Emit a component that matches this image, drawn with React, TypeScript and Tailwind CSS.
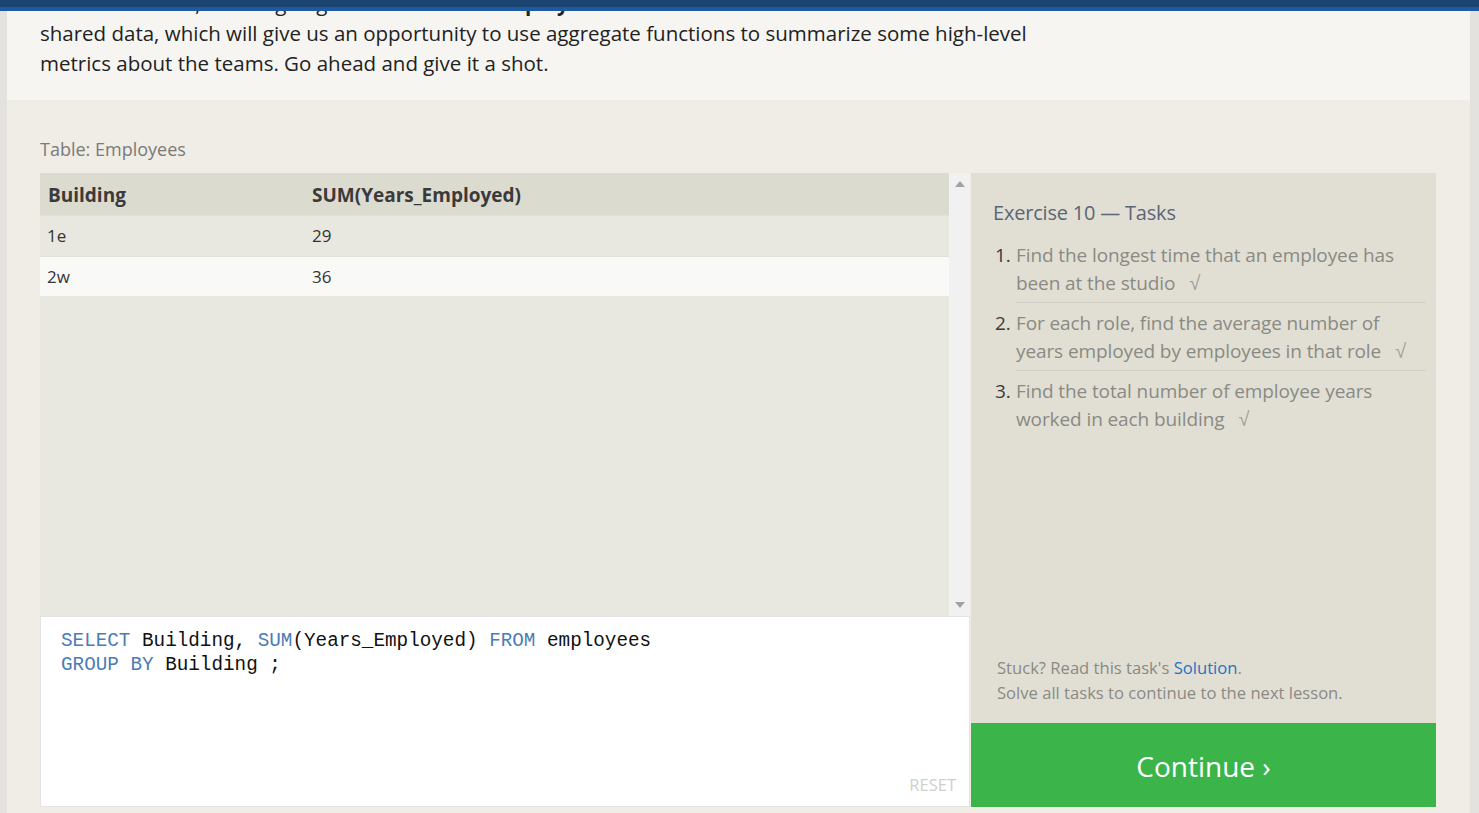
import React from "react";

const sans = { fontFamily: '"Open Sans", "Noto Sans", sans-serif' };
const mono = { fontFamily: '"Liberation Mono", "DejaVu Sans Mono", monospace' };

function Check() {
  return <span className="ml-[14px] text-[20px] text-[#a3a39c]" style={{ fontFamily: '"DejaVu Sans", sans-serif', fontWeight: 200 }}>√</span>;
}

export default function App() {
  return (
    <div className="w-[1479px] h-[813px] overflow-hidden bg-[#e4e2de] flex flex-col" style={sans}>
      <div className="h-[7px] bg-[#1b4472]" />
      <div className="h-[4px] bg-[#1f5aa0]" />
      <div className="flex flex-1 min-h-0">
        <div className="w-[7px] bg-[#e4e2de]" />
        <div className="w-[1463px] flex flex-col">
          <div className="h-[89px] bg-[#f6f5f2] overflow-hidden px-[33px]">
            <div className="mt-[-23px] text-[20.5px] leading-[30px] text-[#222] w-[1100px]">
              <div className="whitespace-nowrap">
                For this exercise, we are going to work with the <b>Employees</b> table. Notice how the rows in this table have
              </div>
              <div className="whitespace-nowrap">shared data, which will give us an opportunity to use aggregate functions to summarize some high-level</div>
              <div className="whitespace-nowrap">metrics about the teams. Go ahead and give it a shot.</div>
            </div>
          </div>
          <div className="flex-1 bg-[#efede6] px-[33px] pt-[36px]">
            <div className="text-[18px] leading-[26px] text-[#7a7a78] h-[37px]">Table: Employees</div>
            <div className="flex">
              <div className="w-[930px] flex flex-col">
                <div className="h-[443px] flex">
                  <div className="w-[909px] bg-[#e9e8e0]">
                    <div className="h-[42px] bg-[#dcdbd0] flex items-center pt-[3px] text-[19px] font-bold text-[#3a3a3a]">
                      <div className="w-[272px] pl-[8px]">Building</div>
                      <div>SUM(Years_Employed)</div>
                    </div>
                    <div className="h-[41px] flex items-center text-[17px] text-[#333] border-t border-[#e2e1d8]">
                      <div className="w-[272px] pl-[7px]">1e</div>
                      <div>29</div>
                    </div>
                    <div className="h-[40px] bg-[#f9f9f8] flex items-center text-[17px] text-[#333] border-t border-[#e2e1d8]">
                      <div className="w-[272px] pl-[7px]">2w</div>
                      <div>36</div>
                    </div>
                  </div>
                  <div className="w-[21px] bg-[#f1f1f1] flex flex-col items-center justify-between py-[8px]">
                    <svg width="10" height="6" viewBox="0 0 10 6"><path d="M5 0 L10 6 L0 6 Z" fill="#a3a3a3" /></svg>
                    <svg width="10" height="6" viewBox="0 0 10 6"><path d="M0 0 L10 0 L5 6 Z" fill="#a3a3a3" /></svg>
                  </div>
                </div>
                <div className="h-[191px] bg-white border border-[#e3e3e0] relative px-[20px] pt-[12px]">
                  <div className="text-[19.3px] leading-[24px] text-[#111]" style={mono}>
                    <div className="whitespace-pre">
                      <span className="text-[#4a7cb5]">SELECT</span> Building, <span className="text-[#4a7cb5]">SUM</span>(Years_Employed) <span className="text-[#4a7cb5]">FROM</span> employees
                    </div>
                    <div className="whitespace-pre">
                      <span className="text-[#4a7cb5]">GROUP BY</span> Building ;
                    </div>
                  </div>
                  <div className="absolute right-[13px] bottom-[8px] text-[16.5px] text-[#cfcfcb]">RESET</div>
                </div>
              </div>
              <div className="w-[465px] ml-[1px] flex flex-col">
                <div className="h-[550px] bg-[#e1dfd4] pl-[22px] pr-[10px] pt-[26px] flex flex-col">
                  <div className="text-[20px] leading-[28px] text-[#5c6575] tracking-[-0.2px]">Exercise 10 — Tasks</div>
                  <ol className="mt-[14px] text-[19px] leading-[28px] text-[#8a8a84] tracking-[-0.1px]">
                    <li className="flex pb-[6px]">
                      <span className="w-[23px] pl-[2px] text-[#3a3a3a]">1.</span>
                      <span className="flex-1 border-b border-[#d2d0c6] pb-[5px]"><span className="block max-w-[400px]">Find the longest time that an employee has been at the <span className="whitespace-nowrap">studio<Check /></span></span></span>
                    </li>
                    <li className="flex pb-[6px]">
                      <span className="w-[23px] pl-[2px] text-[#3a3a3a]">2.</span>
                      <span className="flex-1 border-b border-[#d2d0c6] pb-[5px]"><span className="block max-w-[400px]">For each role, find the average number of years employed by employees in that <span className="whitespace-nowrap">role<Check /></span></span></span>
                    </li>
                    <li className="flex">
                      <span className="w-[23px] pl-[2px] text-[#3a3a3a]">3.</span>
                      <span className="flex-1"><span className="block max-w-[380px]">Find the total number of employee years worked in each <span className="whitespace-nowrap">building<Check /></span></span></span>
                    </li>
                  </ol>
                  <div className="flex-1" />
                  <div className="pl-[4px] pb-[18px] text-[16.6px] leading-[25px] text-[#8a8a84]">
                    <div>Stuck? Read this task's <span className="text-[#1f74c0]">Solution</span>.</div>
                    <div>Solve all tasks to continue to the next lesson.</div>
                  </div>
                </div>
                <div className="h-[84px] bg-[#3bb54a] flex items-center justify-center pt-[2px] text-white text-[28px]">
                  Continue ›
                </div>
              </div>
            </div>
          </div>
        </div>
        <div className="w-[9px] bg-[#e4e2de]" />
      </div>
    </div>
  );
}
